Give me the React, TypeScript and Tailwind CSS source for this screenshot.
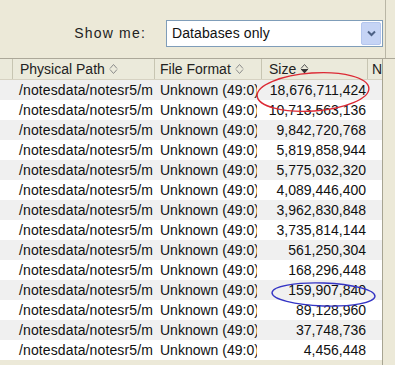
import * as React from "react";

const SIZES = [
  "18,676,711,424",
  "10,713,563,136",
  "9,842,720,768",
  "5,819,858,944",
  "5,775,032,320",
  "4,089,446,400",
  "3,962,830,848",
  "3,735,814,144",
  "561,250,304",
  "168,296,448",
  "159,907,840",
  "89,128,960",
  "37,748,736",
  "4,456,448",
];

// Hollow up/down sort marker; `down` fills the lower half (active sort)
function SortIcon({ down = false }: { down?: boolean }) {
  return (
    <svg width="9" height="12" viewBox="0 0 9 12" className="ml-[4px] shrink-0">
      <polyline points="1,5.5 4.5,1.5 8,5.5" fill="none" stroke={down ? "#555" : "#8a8a8a"} strokeWidth="1" />
      {down ? (
        <>
          <line x1="1" y1="6.5" x2="8" y2="6.5" stroke="#444" strokeWidth="1" />
          <polygon points="1,6.5 8,6.5 4.5,10.5" fill="#333" />
        </>
      ) : (
        <polyline points="1,6.5 4.5,10.5 8,6.5" fill="none" stroke="#8a8a8a" strokeWidth="1" />
      )}
    </svg>
  );
}

function HeaderCell({ width, children }: { width: string; children?: React.ReactNode }) {
  return (
    <div className={`${width} h-full flex items-center overflow-hidden whitespace-nowrap border-r border-[#c7c5b2] shrink-0`}>
      {children}
    </div>
  );
}

export default function App() {
  return (
    <div
      className="relative w-[395px] h-[365px] overflow-hidden bg-[#ece9d8] text-[14px] text-[#111]"
      style={{ fontFamily: '"Liberation Sans", Arial, sans-serif' }}
    >
      {/* Filter bar */}
      <div className="flex h-[59px] border-b border-[#aca899]">
        <div className="w-[386px] flex justify-end items-start pt-[20px] pr-[2px] border-r border-[#b9b6a5]">
          <div className="h-[27px] flex items-center mr-[20px] tracking-[1.2px] text-[#222]">Show me:</div>
          <div className="w-[217px] h-[27px] bg-white border border-[#7f9db9] flex items-center justify-between pl-[5px] pr-[1px]">
            <span className="tracking-[0.1px]">Databases only</span>
            <div className="w-[20px] h-[23px] rounded-[2px] bg-[#c6d4f5] border border-[#b4c6ee] flex items-center justify-center">
              <svg width="9" height="7" viewBox="0 0 9 7">
                <polyline points="1,1.5 4.5,5 8,1.5" fill="none" stroke="#4d6185" strokeWidth="2" />
              </svg>
            </div>
          </div>
        </div>
        <div className="flex-1" />
      </div>

      <div className="flex">
        <div className="w-[382px] shrink-0">
          {/* Column headers */}
          <div className="h-[21px] flex bg-[#ebeadb] border-b border-[#d6d2c2] text-[#222]">
            <HeaderCell width="w-[13px]" />
            <HeaderCell width="w-[142px]">
              <span className="pl-[7px]">Physical Path</span>
              <SortIcon />
            </HeaderCell>
            <HeaderCell width="w-[107px]">
              <span className="pl-[5px]">File Format</span>
              <SortIcon />
            </HeaderCell>
            <HeaderCell width="w-[106px]">
              <span className="pl-[7px]">Size</span>
              <SortIcon down />
            </HeaderCell>
            <div className="flex-1 h-full flex items-center overflow-hidden pl-[4px]">N</div>
          </div>

          {/* Rows */}
          {SIZES.map((size, i) => (
            <div key={size} className={`h-[20px] flex items-center ${i % 2 === 0 ? "bg-[#f0f0f0]" : "bg-white"}`}>
              <div className="w-[13px] shrink-0" />
              <div className="w-[142px] shrink-0 overflow-hidden whitespace-nowrap pl-[6px] tracking-[0.12px]">/notesdata/notesr5/m</div>
              <div className="w-[107px] shrink-0 pl-[5px]">
                <div className="w-[97px] overflow-hidden whitespace-nowrap">Unknown (49:0)</div>
              </div>
              <div className="w-[106px] shrink-0 overflow-hidden whitespace-nowrap text-right pr-[2px]">{size}</div>
              <div className="flex-1" />
            </div>
          ))}
        </div>
        <div className="flex-1 h-[306px] border-l border-[#a7a492]" />
      </div>

      {/* Hand-drawn annotations */}
      <svg className="absolute inset-0 pointer-events-none" width="395" height="365" viewBox="0 0 395 365">
        <ellipse cx="313" cy="92" rx="56" ry="19" fill="none" stroke="#dc2a35" strokeWidth="1.4" transform="rotate(-4 313 92)" />
        <ellipse cx="323.5" cy="294.5" rx="51.5" ry="11.5" fill="none" stroke="#3434c4" strokeWidth="1.4" transform="rotate(2 323.5 294.5)" />
      </svg>
    </div>
  );
}
